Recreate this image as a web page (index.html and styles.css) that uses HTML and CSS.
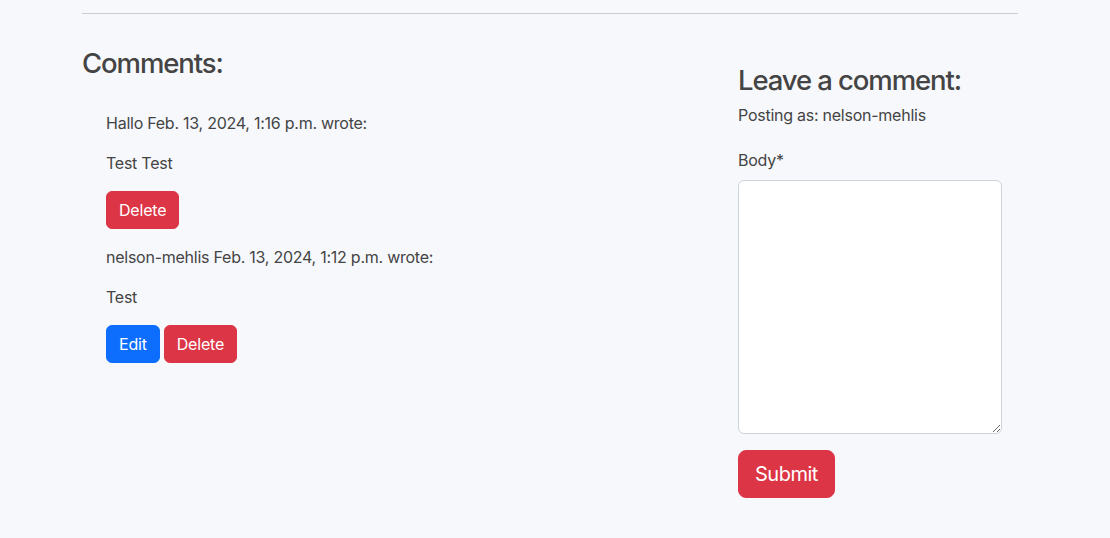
FILE: index.html
```html
<!DOCTYPE html>
<html lang="en">
<head>
<meta charset="utf-8">
<title>Comments</title>
<link rel="stylesheet" href="styles.css">
</head>
<body>
<div class="container">
  <hr class="divider">
  <div class="row">
    <section class="comments-col">
      <h3 class="heading">Comments:</h3>
      <div class="comment-list">
        <div class="comment">
          <p class="meta">Hallo Feb. 13, 2024, 1:16 p.m. wrote:</p>
          <p class="body">Test Test</p>
          <div class="actions">
            <button class="btn btn-danger">Delete</button>
          </div>
        </div>
        <div class="comment">
          <p class="meta">nelson-mehlis Feb. 13, 2024, 1:12 p.m. wrote:</p>
          <p class="body">Test</p>
          <div class="actions">
            <button class="btn btn-primary">Edit</button>
            <button class="btn btn-danger">Delete</button>
          </div>
        </div>
      </div>
    </section>
    <section class="form-col">
      <h3 class="heading">Leave a comment:</h3>
      <p class="posting">Posting as: nelson-mehlis</p>
      <form class="comment-form">
        <div class="field">
          <label class="label" for="body">Body*</label>
          <textarea id="body" class="textarea" rows="10"></textarea>
        </div>
        <button type="button" class="btn btn-danger btn-lg">Submit</button>
      </form>
    </section>
  </div>
</div>
</body>
</html>
```

FILE: styles.css
```css
* { box-sizing: border-box; }

body {
  margin: 0;
  padding-right: 10px;
  background: #f7f8fc;
  color: #444;
  font-family: Inter, "Liberation Sans", sans-serif;
  font-size: 16px;
  line-height: 1.5;
  letter-spacing: -0.25px;
}

.container {
  width: 936px;
  margin: 0 auto;
}

.divider {
  margin: 13px 0 0;
  border: 0;
  border-top: 1px solid #cbcdd2;
  height: 0;
}

.row {
  display: grid;
  grid-template-columns: 616px 296px;
  column-gap: 24px;
  margin-top: 33px;
}

.heading {
  margin: 0 0 8px;
  font-size: 27.5px;
  font-weight: 500;
  line-height: 1.2;
  letter-spacing: -1.1px;
  color: #444;
}

.comment-list {
  padding: 23px 24px 0;
}

.comment p {
  margin: 0 0 16px;
}

.actions {
  display: flex;
  gap: 4px;
  margin-bottom: 16px;
}

.btn {
  display: inline-block;
  font-family: inherit;
  font-size: 16px;
  line-height: 24px;
  letter-spacing: -0.2px;
  padding: 6px 12px;
  border: 1px solid transparent;
  border-radius: 6px;
  color: #fff;
  cursor: pointer;
}

.btn-danger { background: #dc3545; border-color: #dc3545; }
.btn-primary { background: #0d6efd; border-color: #0d6efd; }

.btn-lg {
  font-size: 20px;
  line-height: 30px;
  padding: 8px 16px;
  border-radius: 8px;
  letter-spacing: -0.5px;
}

.form-col {
  padding: 17px 16px 16px;
}

.form-col .heading {
  margin-bottom: 6px;
}

.posting {
  margin: 0 0 21px;
}

.field {
  margin-bottom: 16px;
}

.label {
  display: block;
  margin-bottom: 8px;
}

.textarea {
  display: block;
  width: 100%;
  height: 254px;
  padding: 6px 12px;
  font-family: inherit;
  font-size: 16px;
  line-height: 24px;
  background: #fff;
  border: 1px solid #ced4da;
  border-radius: 6px;
  resize: vertical;
}
```
